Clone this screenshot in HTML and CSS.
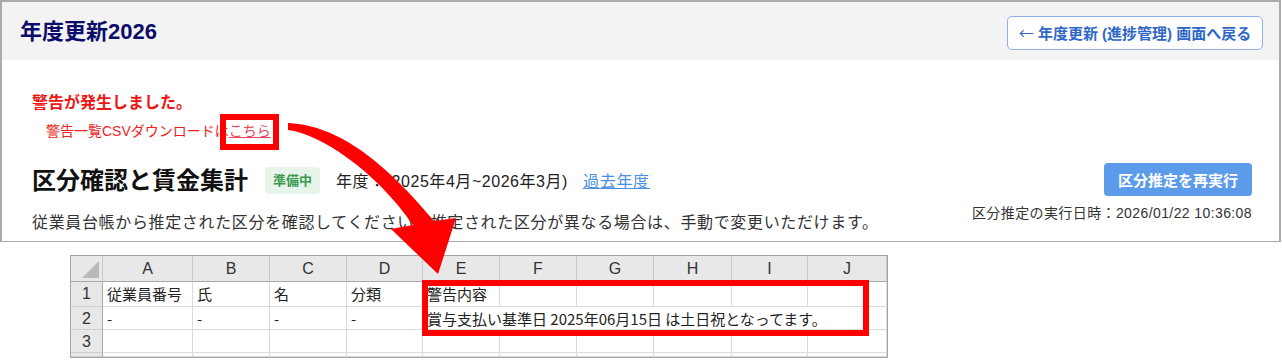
FILE: index.html
```html
<!DOCTYPE html>
<html lang="ja">
<head>
<meta charset="utf-8">
<title>年度更新2026</title>
<link rel="stylesheet" href="styles.css">
</head>
<body>
<div class="frame">
  <header class="header">
    <h1 class="app-title">年度更新2026</h1>
    <button class="back-btn"><span class="back-arrow">←</span> 年度更新 (進捗管理) 画面へ戻る</button>
  </header>
  <div class="content">
    <p class="warn-title">警告が発生しました。</p>
    <p class="warn-link">警告一覧CSVダウンロードは<a class="here">こちら<span class="hl-box"></span></a></p>
    <div class="section">
      <div class="section-main">
        <div class="title-row">
          <h2 class="section-title">区分確認と賃金集計</h2>
          <span class="badge">準備中</span>
          <span class="period">年度：(2025年4月~2026年3月)</span>
          <a class="past">過去年度</a>
        </div>
        <p class="desc">従業員台帳から推定された区分を確認してください。推定された区分が異なる場合は、手動で変更いただけます。</p>
      </div>
      <div class="section-side">
        <button class="rerun">区分推定を再実行</button>
        <div class="run-date">区分推定の実行日時：2026/01/22 10:36:08</div>
      </div>
    </div>
  </div>
</div>

<div class="sheet">
  <div class="cell hd corner"></div>
  <div class="cell hd">A</div>
  <div class="cell hd">B</div>
  <div class="cell hd">C</div>
  <div class="cell hd">D</div>
  <div class="cell hd">E</div>
  <div class="cell hd">F</div>
  <div class="cell hd">G</div>
  <div class="cell hd">H</div>
  <div class="cell hd">I</div>
  <div class="cell hd">J</div>

  <div class="cell rn">1</div>
  <div class="cell">従業員番号</div>
  <div class="cell">氏</div>
  <div class="cell">名</div>
  <div class="cell">分類</div>
  <div class="cell">警告内容</div>
  <div class="cell"></div>
  <div class="cell"></div>
  <div class="cell"></div>
  <div class="cell"></div>
  <div class="cell"></div>

  <div class="cell rn">2</div>
  <div class="cell">-</div>
  <div class="cell">-</div>
  <div class="cell">-</div>
  <div class="cell">-</div>
  <div class="cell span6">賞与支払い基準日 2025年06月15日 は土日祝となってます。</div>

  <div class="cell rn">3</div>
  <div class="cell"></div>
  <div class="cell"></div>
  <div class="cell"></div>
  <div class="cell"></div>
  <div class="cell"></div>
  <div class="cell"></div>
  <div class="cell"></div>
  <div class="cell"></div>
  <div class="cell"></div>
  <div class="cell"></div>

  <div class="cell rn"></div>
  <div class="cell"></div>
  <div class="cell"></div>
  <div class="cell"></div>
  <div class="cell"></div>
  <div class="cell"></div>
  <div class="cell"></div>
  <div class="cell"></div>
  <div class="cell"></div>
  <div class="cell"></div>
  <div class="cell"></div>

  <div class="sheet-hl"></div>
</div>

<svg class="callout-arrow" width="1282" height="362" viewBox="0 0 1282 362" aria-hidden="true">
  <path d="M 288 123 C 330 125, 375 150, 434 221 L 456 218 L 438 274 L 391 229 L 413 225 C 375 170, 320 134, 288 130 Z" fill="#ff0000"/>
</svg>
</body>
</html>
```

FILE: styles.css
```css
* { box-sizing: border-box; }

html, body {
  margin: 0;
  padding: 0;
  background: #ffffff;
  width: 1282px;
  height: 362px;
  overflow: hidden;
}

body {
  position: relative;
  font-family: "Liberation Sans", "Noto Sans CJK JP", sans-serif;
  color: #333;
}

.frame {
  width: 1281px;
  border: 2px solid #ababab;
  border-bottom-width: 1px;
  background: #fff;
}

.header {
  height: 58px;
  background: #f3f3f3;
  display: flex;
  align-items: center;
  justify-content: space-between;
  padding: 0 16px 0 18px;
}

.app-title {
  margin: 0;
  font-size: 22px;
  font-weight: 700;
  color: #0c0d6b;
  line-height: 1;
  padding-top: 1px;
}

.back-btn {
  height: 34px;
  width: 256px;
  margin-top: 3px;
  padding: 0;
  border: 1px solid #8eb0e6;
  border-radius: 5px;
  background: #fff;
  color: #2f67c6;
  font-family: "Liberation Sans", "Noto Sans CJK JP", sans-serif;
  font-size: 15px;
  font-weight: 700;
  text-align: center;
  white-space: nowrap;
}

.back-arrow {
  font-family: "Noto Sans CJK JP", sans-serif;
  font-weight: 400;
}

.content {
  padding: 31px 27px 6px 30px;
}

.warn-title {
  margin: 0;
  font-size: 16px;
  font-weight: 700;
  line-height: 24px;
  color: #f01414;
}

.warn-link {
  margin: 6px 0 0 14px;
  font-size: 14px;
  line-height: 20px;
  color: #f01e1e;
}

.here {
  position: relative;
  color: #e8485c;
  text-decoration: underline;
}

.hl-box {
  position: absolute;
  left: -9px;
  right: -8px;
  top: -9px;
  bottom: -11px;
  border: 6px solid #ff0000;
}

.section {
  margin-top: 22px;
  display: flex;
  justify-content: space-between;
}

.title-row {
  height: 34px;
  display: flex;
  align-items: center;
}

.section-title {
  margin: 0;
  font-size: 24px;
  font-weight: 700;
  color: #111;
  line-height: 1;
  padding-top: 2px;
}

.badge {
  margin-left: 17px;
  height: 27px;
  line-height: 27px;
  padding: 0 8px;
  border-radius: 4px;
  background: #e6f4e9;
  color: #3c9a4e;
  font-size: 13px;
  font-weight: 700;
}

.period {
  margin-left: 16px;
  font-size: 16px;
  letter-spacing: 0.55px;
  color: #222;
}

.past {
  margin-left: 15px;
  font-size: 16px;
  letter-spacing: 0.7px;
  color: #4a8fe0;
  text-decoration: underline;
}

.desc {
  margin: 14px 0 0;
  font-size: 16px;
  line-height: 24px;
  letter-spacing: 0.65px;
  color: #333;
}

.section-side {
  display: flex;
  flex-direction: column;
  align-items: flex-end;
}

.rerun {
  width: 148px;
  height: 33px;
  border: none;
  border-radius: 4px;
  background: #5b9bea;
  color: #fff;
  font-family: "Liberation Sans", "Noto Sans CJK JP", sans-serif;
  font-size: 15px;
  font-weight: 700;
}

.run-date {
  margin-top: 7px;
  font-size: 14px;
  line-height: 20px;
  letter-spacing: 0.4px;
  color: #333;
}

/* spreadsheet */
.sheet {
  position: relative;
  margin: 13px 0 0 70px;
  width: 818px;
  border: 1px solid #a4a4a4;
  display: grid;
  grid-template-columns: 32px 90px 77px 77px 76px 77px 77px 77px 78px 76px 79px;
  grid-template-rows: 26px 25px 23px 23px 4px;
  background: #fff;
  font-family: "Noto Sans CJK JP", "Liberation Sans", sans-serif;
  font-size: 15px;
  color: #222;
}

.cell {
  border-right: 1px solid #dadada;
  border-bottom: 1px solid #dadada;
  padding: 0 0 0 4px;
  line-height: 23px;
  white-space: nowrap;
  overflow: visible;
}

.cell.hd {
  background: #e8e8e8;
  border-right-color: #c9c9c9;
  border-bottom-color: #a8a8a8;
  text-align: center;
  padding: 0;
  line-height: 26px;
  font-family: "Liberation Sans", sans-serif;
  font-size: 16px;
  color: #333;
}

.cell.rn {
  background: #e8e8e8;
  border-right-color: #a8a8a8;
  border-bottom-color: #cfcfcf;
  text-align: center;
  padding: 0;
  font-family: "Liberation Sans", sans-serif;
  font-size: 16px;
  color: #333;
}

.corner {
  position: relative;
}

.corner::after {
  content: "";
  position: absolute;
  right: 3px;
  bottom: 3px;
  width: 17px;
  height: 17px;
  background: #b9b9b9;
  clip-path: polygon(100% 0, 100% 100%, 0 100%);
}

.span6 {
  grid-column: span 6;
}

.sheet-hl {
  position: absolute;
  left: 351px;
  top: 24px;
  width: 447px;
  height: 56px;
  border: 6px solid #ff0000;
}

.callout-arrow {
  position: absolute;
  left: 0;
  top: 0;
  pointer-events: none;
  z-index: 10;
}
```
